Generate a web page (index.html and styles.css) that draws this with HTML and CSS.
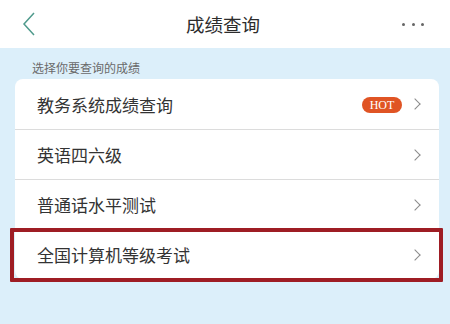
FILE: index.html
```html
<!DOCTYPE html>
<html lang="zh">
<head>
<meta charset="utf-8">
<link rel="stylesheet" href="styles.css">
</head>
<body>
<div class="page">
  <header class="nav">
    <div class="side"><svg class="back" width="14" height="26" viewBox="0 0 14 26"><polyline points="12,2 2,13 12,24" fill="none" stroke="#4f9a8c" stroke-width="1.5"/></svg></div>
    <div class="title">成绩查询</div>
    <div class="side right"><div class="dots"><span></span><span></span><span></span></div></div>
  </header>
  <main class="content">
    <div class="hint">选择你要查询的成绩</div>
    <div class="card">
      <div class="row"><span class="label">教务系统成绩查询</span><span class="hot">HOT</span><span class="chev"></span></div>
      <div class="row"><span class="label">英语四六级</span><span class="chev"></span></div>
      <div class="row"><span class="label">普通话水平测试</span><span class="chev"></span></div>
      <div class="row marked"><span class="label">全国计算机等级考试</span><span class="chev"></span></div>
    </div>
  </main>
</div>
</body>
</html>
```
FILE: styles.css
```css
* { box-sizing: border-box; }
html, body { margin: 0; padding: 0; }
body {
  width: 450px; height: 324px; overflow: hidden;
  font-family: "Noto Sans CJK SC", "Noto Sans", sans-serif;
  background: #dceffa;
  color: #333;
}
.page { height: 324px; display: flex; flex-direction: column; }
.nav {
  height: 48px; background: #fff;
  display: flex; align-items: center;
  padding: 0 26px 0 22px;
}
.side { width: 50px; display: flex; align-items: center; }
.side.right { justify-content: flex-end; }
.back { display: block; margin-top: -1px; }
.title {
  flex: 1; text-align: center; font-size: 18.5px; color: #2c2c2c;
}
.dots { display: flex; gap: 6.5px; }
.dots span { width: 3px; height: 3px; background: #666; border-radius: 50%; display: block; }
.content { padding: 0 11px 0 15px; }
.hint { font-size: 12px; color: #6a6a6a; padding: 11px 0 0 17px; height: 31px; line-height: 18px; }
.card { background: #fff; border-radius: 8px; }
.row {
  height: 50px; display: flex; align-items: center;
  padding: 0 17px 0 22px;
  border-top: 1px solid #dcdcdc;
  position: relative;
}
.row:first-child { border-top: none; }
.label { flex: 1; font-size: 17px; color: #333; }
.hot {
  background: #e05424; color: #fff; font-family: "Liberation Serif", serif;
  font-size: 12px; height: 16px; line-height: 16px; width: 40px; text-align: center;
  border-radius: 8px; margin-right: 9px; margin-top: 1px;
}
.chev {
  width: 8px; height: 8px; border-right: 1.5px solid #8a8a8a; border-top: 1.5px solid #8a8a8a;
  transform: rotate(45deg); margin-right: 3px;
}
.marked::after {
  content: ""; position: absolute; left: -5px; right: -4px; top: -2px; bottom: -3px;
  border: 4px solid #9e1d24; border-radius: 1px;
}
```
